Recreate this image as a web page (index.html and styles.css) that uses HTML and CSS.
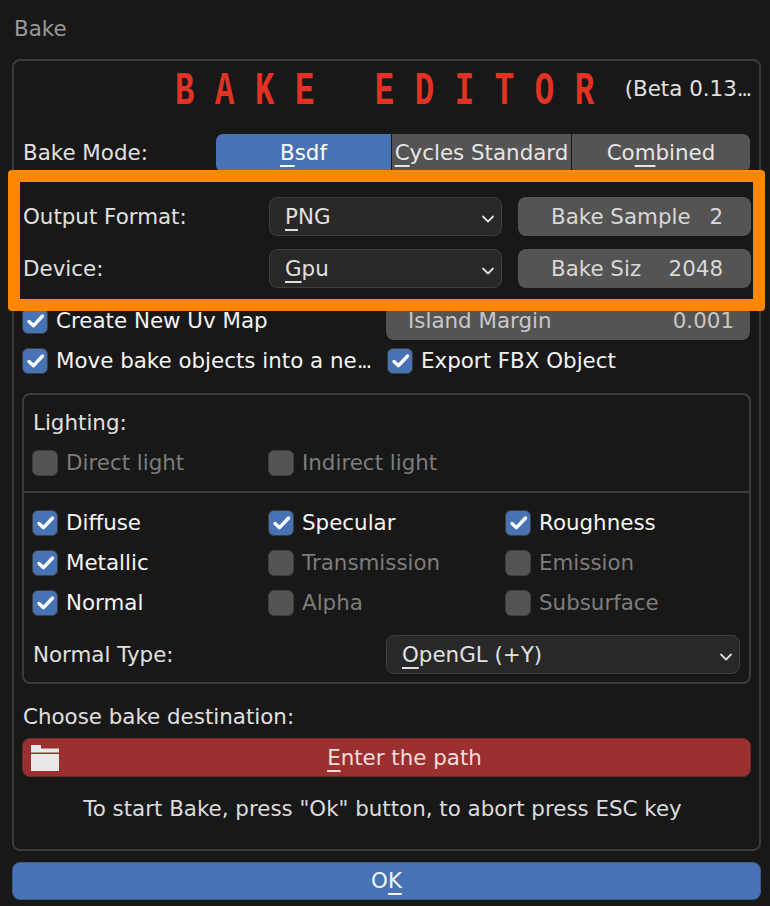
FILE: index.html
```html
<!DOCTYPE html>
<html lang="en">
<head>
<meta charset="utf-8">
<title>Bake</title>
<link rel="stylesheet" href="styles.css">
</head>
<body>
<svg class="defs" width="0" height="0" aria-hidden="true">
  <symbol id="tick" viewBox="0 0 24 24"><path d="M6 12.500l4.500 4.200L19.500 7" fill="none" stroke="#fff" stroke-width="3.400" stroke-linecap="round" stroke-linejoin="round"/></symbol>
  <symbol id="chev" viewBox="0 0 14 10"><path d="M2 2.500l5 5 5-5" fill="none" stroke="#dcdcdc" stroke-width="1.800" stroke-linecap="round" stroke-linejoin="round"/></symbol>
</svg>
<main class="dialog">
  <header class="dialog-title">Bake</header>
  <section class="panel">
    <div class="title-row">
      <h1 class="big-title">BAKE EDITOR</h1>
      <span class="beta">(Beta 0.13<span class="dots">...</span></span>
    </div>
    <div class="row mode-row">
      <span class="label mode-label">Bake Mode:</span>
      <div class="segmented">
        <span class="seg seg-a seg-on"><u>B</u>sdf</span>
        <span class="seg seg-b"><u>C</u>ycles Standard</span>
        <span class="seg seg-c">Co<u>m</u>bined</span>
      </div>
    </div>
    <div class="row format-row">
      <span class="label col-label">Output Format:</span>
      <div class="select col-select"><span><u>P</u>NG</span><svg class="chev"><use href="#chev"/></svg></div>
      <div class="num col-num"><span>Bake Sample</span><span>2</span></div>
    </div>
    <div class="row device-row">
      <span class="label col-label">Device:</span>
      <div class="select col-select"><span><u>G</u>pu</span><svg class="chev"><use href="#chev"/></svg></div>
      <div class="num col-num"><span>Bake Siz</span><span>2048</span></div>
    </div>
    <div class="row uv-row">
      <label class="check on wide"><i class="box"><svg><use href="#tick"/></svg></i>Create New Uv Map</label>
      <div class="num margin"><span>Island Margin</span><span>0.001</span></div>
    </div>
    <div class="row move-row">
      <label class="check on wide"><i class="box"><svg><use href="#tick"/></svg></i><span>Move bake objects into a ne<span class="dots">...</span></span></label>
      <label class="check on"><i class="box"><svg><use href="#tick"/></svg></i>Export FBX Object</label>
    </div>
    <section class="lighting">
      <div class="light-top">
        <div class="label light-head">Lighting:</div>
        <div class="row light-row two">
          <label class="check off"><i class="box"></i>Direct light</label>
          <label class="check off"><i class="box"></i>Indirect light</label>
        </div>
      </div>
      <div class="light-bottom">
        <div class="light-grid">
          <label class="check on"><i class="box"><svg><use href="#tick"/></svg></i>Diffuse</label>
          <label class="check on"><i class="box"><svg><use href="#tick"/></svg></i>Specular</label>
          <label class="check on"><i class="box"><svg><use href="#tick"/></svg></i>Roughness</label>
          <label class="check on"><i class="box"><svg><use href="#tick"/></svg></i>Metallic</label>
          <label class="check off"><i class="box"></i>Transmission</label>
          <label class="check off"><i class="box"></i>Emission</label>
          <label class="check on"><i class="box"><svg><use href="#tick"/></svg></i>Normal</label>
          <label class="check off"><i class="box"></i>Alpha</label>
          <label class="check off"><i class="box"></i>Subsurface</label>
        </div>
        <div class="row normal-row">
          <span class="label normal-label">Normal Type:</span>
          <div class="select normal-select"><span><u>O</u>penGL (+Y)</span><svg class="chev"><use href="#chev"/></svg></div>
        </div>
      </div>
    </section>
    <div class="label dest-label">Choose bake destination:</div>
    <div class="path-btn">
      <svg class="folder" viewBox="0 0 28 26"><path d="M0 0h10v3.500h18v4H0zM0 9h28v17H0z" fill="#e8e8e8"/></svg>
      <span><u>E</u>nter the path</span>
    </div>
    <p class="hint">To start Bake, press "Ok" button, to abort press ESC key</p>
  </section>
  <button class="ok">O<u>K</u></button>
</main>
<div class="highlight"></div>
</body>
</html>
```
FILE: styles.css
```css
* { box-sizing: border-box; }
html, body { margin: 0; height: 100%; }
body {
  width: 770px; height: 906px; overflow: hidden; position: relative;
  background: #181818; color: #e0e0e0;
  font-family: "DejaVu Sans", sans-serif; font-size: 21.4px; line-height: 26px;
}
.defs { position: absolute; }
u { text-decoration: underline; text-decoration-thickness: 1.5px; text-underline-offset: 5px; text-decoration-skip-ink: none; }
.dots { letter-spacing: -2.4px; }
.dialog { padding: 16px 9px 0 12px; }
.dialog-title { color: #989898; height: 26px; margin-left: 2px; margin-bottom: 17px; }
.panel {
  border: 2px solid #3b3b3b; border-radius: 8px;
  height: 792px; padding: 0 8px; display: flex; flex-direction: column;
}
.title-row { height: 73px; position: relative; display: flex; align-items: center; }
.big-title {
  margin: 0; position: absolute; left: 153px; top: 3px; white-space: pre;
  font: bold 46px/56px "Liberation Mono", monospace; color: #e13224;
  letter-spacing: 29.5px; transform: scaleX(.7); transform-origin: 0 50%;
}
.beta { position: absolute; right: 1px; top: 15px; color: #e0e0e0; }
.row { display: flex; align-items: center; }
.label { color: #e0e0e0; }
.mode-row { height: 38px; margin-bottom: 25px; }
.mode-label { width: 194px; padding-left: 1px; }
.segmented { width: 534px; display: flex; height: 38px; gap: 1px; border-radius: 7px; overflow: hidden; }
.seg { background: #545454; display: flex; align-items: center; justify-content: center; color: #e6e6e6; white-space: nowrap; }
.seg-a { width: 175px; }
.seg-b { width: 179px; }
.seg-c { width: 178px; }
.seg-on { background: #4772b3; color: #fff; }
.format-row, .device-row { height: 39px; }
.device-row { margin-top: 13px; }
.col-label { width: 247px; padding-left: 1px; }
.select {
  height: 39px; border: 1px solid #3d3d3d; background: #282828; border-radius: 8px;
  display: flex; align-items: center; justify-content: space-between; padding: 0 6px 0 15px; color: #e0e0e0;
}
.col-select { width: 233px; margin-right: 16px; }
.chev { width: 14px; height: 10px; margin-top: 5px; }
.num {
  height: 39px; background: #545454; border-radius: 8px; color: #d8d8d8;
  display: flex; align-items: center; justify-content: space-between;
}
.col-num { width: 233px; padding: 0 28px 0 33px; }
.uv-row { height: 39px; margin-top: 13px; }
.wide { width: 364px; }
.move-row .wide { width: 365px; }
.margin { width: 364px; padding: 0 16px 0 22px; color: #c8c8c8; }
.move-row { height: 26px; margin-top: 8px; }
.check { display: flex; align-items: center; gap: 8px; color: #f4f4f4; white-space: nowrap; }
.check.off { color: #7c7c7c; }
.box {
  width: 26px; height: 26px; flex: none; border-radius: 6px; border: 1px solid #3d3d3d;
  background: #545454; display: block;
}
.box svg { display: block; width: 24px; height: 24px; }
.on .box { background: #4772b3; }
.lighting {
  margin-top: 19px; height: 291px; width: 729px; border: 2px solid #3b3b3b; border-radius: 8px;
  display: flex; flex-direction: column;
}
.light-top { height: 98px; border-bottom: 2px solid #3b3b3b; padding: 15px 8px 0; }
.light-head { height: 26px; padding-left: 1px; }
.light-row { margin-top: 14px; }
.two .check { width: 236px; }
.light-bottom { padding: 17px 8px 0; }
.light-grid { display: grid; grid-template-columns: 236px 237px 1fr; grid-auto-rows: 26px; row-gap: 14px; }
.normal-row { height: 39px; margin-top: 19px; }
.normal-label { width: 354px; padding-left: 1px; }
.normal-select { width: 354px; }
.dest-label { margin-top: 20px; height: 26px; padding-left: 1px; }
.path-btn {
  margin-top: 8px; width: 729px; height: 39px; background: #9b3030; border: 1px solid #6e2a2a; border-radius: 8px;
  position: relative; display: flex; align-items: center; justify-content: center; color: #f0dede; padding-left: 36px;
}
.folder { position: absolute; left: 8px; top: 6px; width: 28px; height: 26px; }
.hint { margin: 19px 0 0; padding-right: 8px; text-align: center; color: #dcdcdc; }
.ok {
  display: block; margin-top: 11px; width: 749px; height: 38px; border: 1px solid #3a5a8c; border-radius: 8px;
  background: #4772b3; color: #f4f4f4; font: inherit; padding: 0;
}
.highlight {
  position: absolute; left: 8px; top: 170px; width: 757px; height: 141px;
  border: 12px solid #ff8800; border-radius: 4px;
}
```
